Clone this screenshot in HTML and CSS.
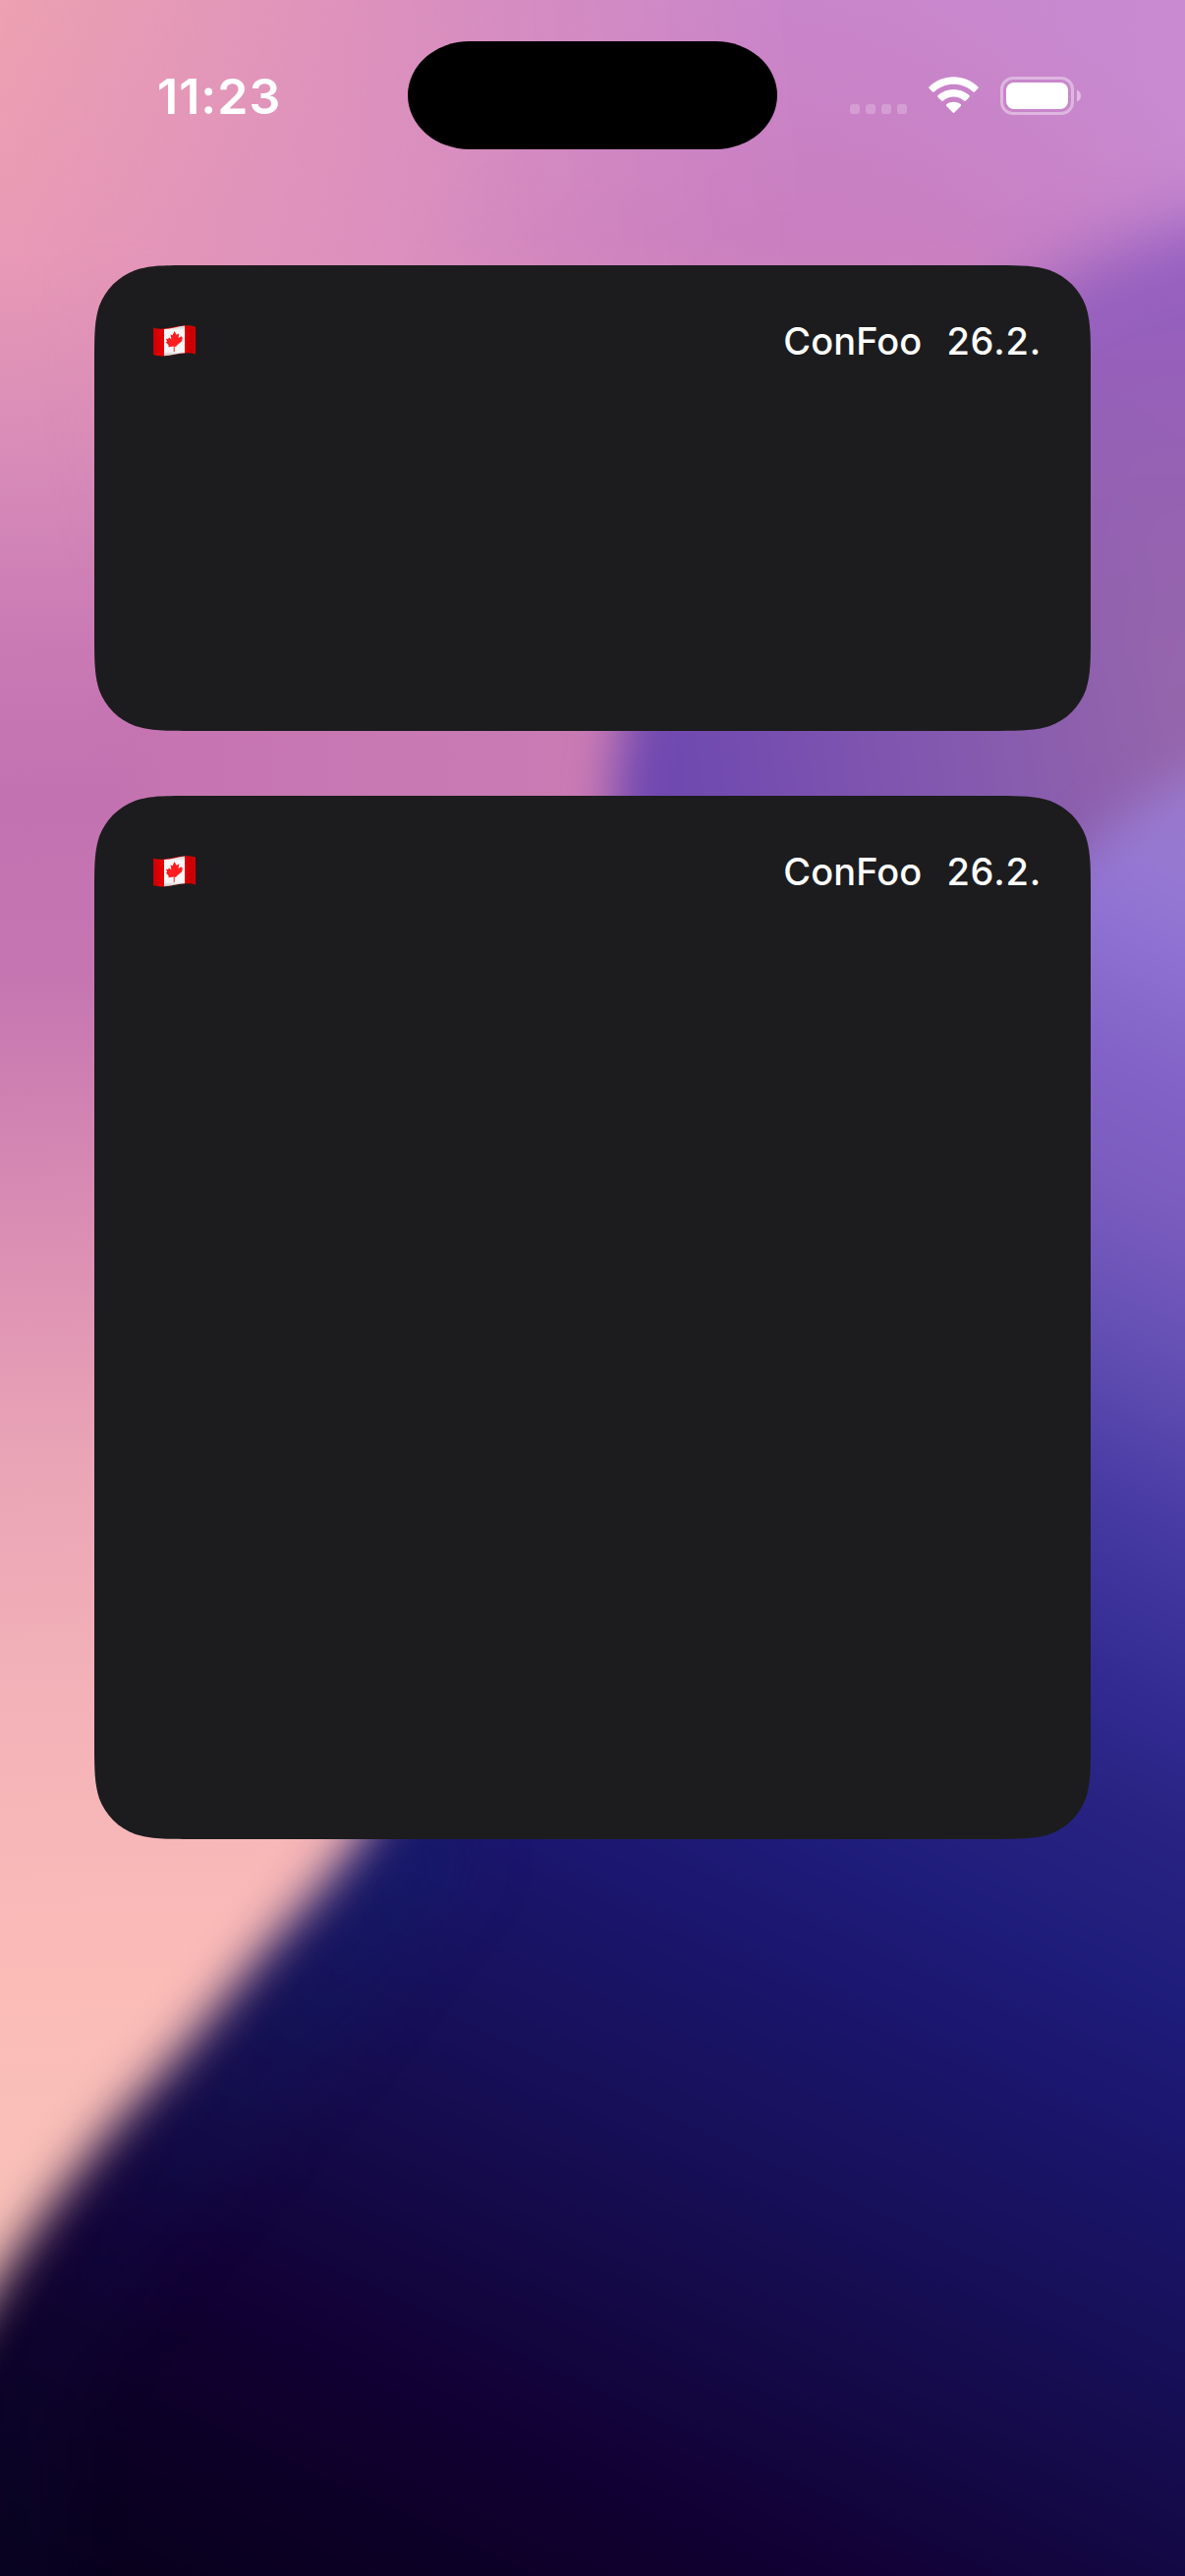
FILE: index.html
```html
<!DOCTYPE html>
<html lang="en">
<head>
<meta charset="utf-8">
<title>Home Screen Widgets</title>
<link rel="stylesheet" href="styles.css">
</head>
<body>
<main class="screen">
  <svg class="wallpaper" viewBox="0 0 1206 2622" aria-hidden="true">
    <defs>
      <linearGradient id="pink" gradientUnits="userSpaceOnUse" x1="0" y1="0" x2="80" y2="2622">
        <stop offset="0" stop-color="#eda1b1"/>
        <stop offset=".1" stop-color="#e899b6"/>
        <stop offset=".19" stop-color="#d589b8"/>
        <stop offset=".25" stop-color="#c97ab4"/>
        <stop offset=".31" stop-color="#c272b1"/>
        <stop offset=".38" stop-color="#c576b1"/>
        <stop offset=".47" stop-color="#d98cb3"/>
        <stop offset=".57" stop-color="#eaa5b6"/>
        <stop offset=".67" stop-color="#f4b3b8"/>
        <stop offset=".77" stop-color="#fbbcb8"/>
        <stop offset=".9" stop-color="#f7c2b8"/>
      </linearGradient>
      <linearGradient id="orchid" gradientUnits="userSpaceOnUse" x1="0" y1="0" x2="1206" y2="-120">
        <stop offset="0" stop-color="#d68bc2" stop-opacity="0"/>
        <stop offset=".2" stop-color="#d68bc2" stop-opacity=".45"/>
        <stop offset=".42" stop-color="#d48bc1" stop-opacity=".95"/>
        <stop offset=".66" stop-color="#c986cb"/>
        <stop offset="1" stop-color="#c88ad1"/>
      </linearGradient>
      <radialGradient id="rose" gradientUnits="userSpaceOnUse" cx="850" cy="450" r="480">
        <stop offset="0" stop-color="#c878b8"/>
        <stop offset=".3" stop-color="#c878b8" stop-opacity=".7"/>
        <stop offset="1" stop-color="#c878b8" stop-opacity="0"/>
      </radialGradient>
      <linearGradient id="fadeDown" x1="0" y1="0" x2="0" y2="1">
        <stop offset=".4" stop-color="#fff"/>
        <stop offset="1" stop-color="#000"/>
      </linearGradient>
      <mask id="topMask"><rect width="1206" height="600" fill="url(#fadeDown)"/></mask>
      <linearGradient id="magenta" gradientUnits="userSpaceOnUse" x1="80" y1="0" x2="600" y2="0">
        <stop offset="0" stop-color="#c472b1" stop-opacity="0"/>
        <stop offset=".2" stop-color="#c675b2"/>
        <stop offset="1" stop-color="#ca7bb4"/>
      </linearGradient>
      <linearGradient id="violet" gradientUnits="userSpaceOnUse" x1="600" y1="790" x2="1206" y2="700">
        <stop offset="0" stop-color="#6d45b0"/>
        <stop offset=".15" stop-color="#7049b0"/>
        <stop offset=".55" stop-color="#8157af"/>
        <stop offset="1" stop-color="#9666ac"/>
      </linearGradient>
      <linearGradient id="violetTop" gradientUnits="userSpaceOnUse" x1="0" y1="200" x2="0" y2="720">
        <stop offset="0" stop-color="#925ec4"/>
        <stop offset=".3" stop-color="#9660bb"/>
        <stop offset="1" stop-color="#9460b0" stop-opacity="0"/>
      </linearGradient>
      <linearGradient id="deep" gradientUnits="userSpaceOnUse" x1="0" y1="0" x2="-995.5" y2="2164">
        <stop offset=".09" stop-color="#9a7acd"/>
        <stop offset=".135" stop-color="#9578d2"/>
        <stop offset=".165" stop-color="#8c70d2"/>
        <stop offset=".21" stop-color="#8262c6"/>
        <stop offset=".265" stop-color="#7a5bbe"/>
        <stop offset=".325" stop-color="#614eb2"/>
        <stop offset=".38" stop-color="#483ba4"/>
        <stop offset=".455" stop-color="#322a92"/>
        <stop offset=".502" stop-color="#282382"/>
        <stop offset=".57" stop-color="#1e1c7a"/>
        <stop offset=".62" stop-color="#1b166e"/>
        <stop offset=".7" stop-color="#17105a"/>
        <stop offset=".78" stop-color="#140946"/>
        <stop offset=".85" stop-color="#110034"/>
        <stop offset=".91" stop-color="#0d0027"/>
        <stop offset="1" stop-color="#07001a"/>
      </linearGradient>
      <linearGradient id="rim" gradientUnits="userSpaceOnUse" x1="450" y1="1860" x2="60" y2="2400">
        <stop offset="0" stop-color="#0c2872" stop-opacity=".32"/>
        <stop offset="1" stop-color="#101850" stop-opacity=".15"/>
      </linearGradient>
      <filter id="soft" color-interpolation-filters="sRGB" filterUnits="userSpaceOnUse" x="-200" y="0" width="1700" height="2900"><feGaussianBlur stdDeviation="24"/></filter>
      <filter id="softer" color-interpolation-filters="sRGB" filterUnits="userSpaceOnUse" x="-200" y="0" width="1900" height="2900"><feGaussianBlur stdDeviation="34"/></filter>
      <clipPath id="upper"><rect width="1206" height="600"/></clipPath>
      <clipPath id="lower"><rect y="600" width="1206" height="2022"/></clipPath>
    </defs>
    <rect width="1206" height="2622" fill="url(#pink)"/>
    <g mask="url(#topMask)">
      <rect width="1206" height="600" fill="url(#orchid)"/>
      <rect width="1206" height="600" fill="url(#rose)"/>
    </g>
    <rect x="96" y="700" width="700" height="150" fill="url(#magenta)"/>
    <g clip-path="url(#upper)">
      <g filter="url(#softer)">
        <path d="M1500 190C1260 200 1130 245 1040 300C840 430 650 590 630 740V1000H1500Z" fill="url(#violet)"/>
        <path d="M1500 190C1260 200 1130 245 1040 300C840 430 650 590 630 740V1000H1500Z" fill="url(#violetTop)"/>
      </g>
    </g>
    <g clip-path="url(#lower)">
      <g filter="url(#soft)">
        <path d="M1500 190L1040 300C840 430 650 590 634 744C610 850 640 1000 640 1300H1500Z" fill="url(#violet)"/>
        <path d="M1000 190V1300H1500V190Z" fill="url(#violetTop)"/>
      </g>
    </g>
    <path d="M1500 630L1206 790Q1140 825 1100 875L700 1200Q570 1560 368 1872C331 1925 302 1950 273 1984Q234 2030 190 2084C147 2132 120 2158 92 2195Q40 2258 0 2322L-150 2560V2850H1500Z" fill="url(#deep)" filter="url(#soft)"/>
    <path d="M450 1860L310 2050L130 2270L20 2450V2720" fill="none" stroke="url(#rim)" stroke-width="80" filter="url(#softer)"/>
  </svg>

  <header class="status-bar">
    <time class="clock">11:23</time>
    <div class="island"></div>
    <div class="indicators">
      <svg class="cellular" viewBox="0 0 58 10"><rect width="10" height="10" rx="3"/><rect x="16" width="10" height="10" rx="3"/><rect x="32" width="10" height="10" rx="3"/><rect x="48" width="10" height="10" rx="3"/></svg>
      <svg class="wifi" viewBox="0 0 51 38">
        <path d="M.7 10.2C14-3.2 37-3.2 50.3 10.2Q51.2 11.2 50.3 12.1L46.9 15.4Q46 16.2 45 15.3C34.5 5.2 16.5 5.2 6 15.3Q5 16.2 4.1 15.4L.7 12.1Q-.2 11.2.7 10.2Z"/>
        <path d="M9.5 19.1C18.3 10.8 32.7 10.8 41.5 19.1Q42.4 20 41.5 20.9L37.9 24.4Q37 25.2 36 24.4C30 19.3 21 19.3 15 24.4Q14 25.2 13.1 24.4L9.5 20.9Q8.6 20 9.5 19.1Z"/>
        <path d="M18.4 28.1C22.4 24.9 28.6 24.9 32.6 28.1Q33.6 29 32.7 30L26.4 36.6Q25.5 37.4 24.6 36.6L18.3 30Q17.4 29 18.4 28.1Z"/>
      </svg>
      <svg class="battery" viewBox="0 0 82 39">
        <rect x="1.5" y="1.5" width="72" height="36" rx="11.5" fill="none" stroke="#fff" stroke-opacity=".4" stroke-width="3"/>
        <rect x="6" y="6" width="63" height="27" rx="8"/>
        <path d="M78 13.5Q82 15.5 82 19.5Q82 23.5 78 25.5Z" fill-opacity=".45"/>
      </svg>
    </div>
  </header>

  <svg class="symbols" width="0" height="0" aria-hidden="true">
    <defs>
      <linearGradient id="flagRed" x1="0" x2="1"><stop offset="0" stop-color="#c90003"/><stop offset=".2" stop-color="#e60004"/><stop offset=".75" stop-color="#e20004"/><stop offset=".9" stop-color="#c40002"/><stop offset="1" stop-color="#d80003"/></linearGradient>
      <linearGradient id="flagWhite" x1="0" y1="0" x2="0" y2="1"><stop offset="0" stop-color="#ccc"/><stop offset=".15" stop-color="#f7f7f7"/><stop offset=".85" stop-color="#f7f7f7"/><stop offset="1" stop-color="#c5c5c5"/></linearGradient>
    </defs>
    <symbol id="canada" viewBox="0 0 43 32">
      <path d="M0 2.5C14 7 27-3 43 1.5V29.5C29 25 14 35 0 30Z" fill="url(#flagRed)"/>
      <path d="M11 4.1C18 3.7 25 1.2 32 .5V28.3C25 28.7 18 31 11 31.3Z" fill="url(#flagWhite)"/>
      <path d="M21.5 6L23.7 9.7L26.2 8.3L25.6 13L28.6 11.2L29.8 13L29.1 16.3L23.5 21L23.2 22L21.7 21.6V27H20.7V21.6L15.4 22.3L15.7 20.6L12.9 17.5L14.1 16.5L12.9 13.8L15 13.9L16 12.6L18.3 14.2L17.6 9.5L19.6 10.2Z" fill="#ff1c1f"/>
    </symbol>
  </svg>

  <section class="widgets">
    <article class="widget widget-medium">
      <header class="event">
        <svg class="flag" role="img" aria-label="Canada"><use href="#canada"/></svg>
        <span class="event-name">ConFoo</span>
        <span class="event-date">26.2.</span>
      </header>
    </article>
    <article class="widget widget-large">
      <header class="event">
        <svg class="flag" role="img" aria-label="Canada"><use href="#canada"/></svg>
        <span class="event-name">ConFoo</span>
        <span class="event-date">26.2.</span>
      </header>
    </article>
  </section>
</main>
</body>
</html>
```
FILE: styles.css
```css
* {
  box-sizing: border-box;
}

body {
  margin: 0;
  font-family: Inter, "Liberation Sans", sans-serif;
  color: #fff;
}

.screen {
  position: relative;
  isolation: isolate;
  width: 1206px;
  height: 2622px;
  overflow: hidden;
  background: #c070b0;
}

.wallpaper {
  position: absolute;
  inset: 0;
  z-index: -1;
  width: 100%;
  height: 100%;
}

.symbols {
  display: block;
}

.status-bar {
  display: grid;
  grid-template-columns: 415px 376px 1fr;
  align-items: center;
  height: 270px;
  padding-bottom: 76px;
}

.clock {
  padding: 2px 0 0 160px;
  font-size: 50px;
  font-weight: 600;
  line-height: 60px;
  letter-spacing: 1px;
}

.island {
  height: 110px;
  border-radius: 63px / 55px;
  background: #000;
}

.indicators {
  display: flex;
  align-items: center;
  padding-left: 74px;
}

.indicators svg {
  flex: none;
  fill: #fff;
}

.cellular {
  width: 58px;
  height: 10px;
  margin: 27px 22px 0 0;
  opacity: 0.22;
}

.wifi {
  width: 51px;
  height: 38px;
  margin-right: 22px;
}

.battery {
  width: 82px;
  height: 39px;
}

.widgets {
  display: flex;
  flex-direction: column;
  gap: 66px;
  padding: 0 96px;
}

.widget {
  padding: 50px 50px 0 60px;
  background: #1c1c1e;
}

.widget-medium {
  height: 474px;
  clip-path: path("M100.9 0H913.1C942.2 0 956.7 0 972.3 4.9C989.4 11.2 1002.8 24.6 1009.1 41.7C1014 57.3 1014 71.8 1014 100.9V373.1C1014 402.2 1014 416.7 1009.1 432.3C1002.8 449.4 989.4 462.8 972.3 469.1C956.7 474 942.2 474 913.1 474H100.9C71.8 474 57.3 474 41.7 469.1C24.6 462.8 11.2 449.4 4.9 432.3C0 416.7 0 402.2 0 373.1V100.9C0 71.8 0 57.3 4.9 41.7C11.2 24.6 24.6 11.2 41.7 4.9C57.3 0 71.8 0 100.9 0Z");
}

.widget-large {
  height: 1062px;
  clip-path: path("M100.9 0H913.1C942.2 0 956.7 0 972.3 4.9C989.4 11.2 1002.8 24.6 1009.1 41.7C1014 57.3 1014 71.8 1014 100.9V961.1C1014 990.2 1014 1004.7 1009.1 1020.3C1002.8 1037.4 989.4 1050.8 972.3 1057.1C956.7 1062 942.2 1062 913.1 1062H100.9C71.8 1062 57.3 1062 41.7 1057.1C24.6 1050.8 11.2 1037.4 4.9 1020.3C0 1004.7 0 990.2 0 961.1V100.9C0 71.8 0 57.3 4.9 41.7C11.2 24.6 24.6 11.2 41.7 4.9C57.3 0 71.8 0 100.9 0Z");
}

.event {
  display: flex;
  align-items: center;
  height: 54px;
  font-size: 38px;
  font-weight: 500;
  line-height: 54px;
}

.flag {
  width: 43px;
  height: 32px;
  margin-right: auto;
}

.event-name {
  margin-right: 25px;
  letter-spacing: 0.1px;
}

.event-date {
  letter-spacing: 0.8px;
}
```
